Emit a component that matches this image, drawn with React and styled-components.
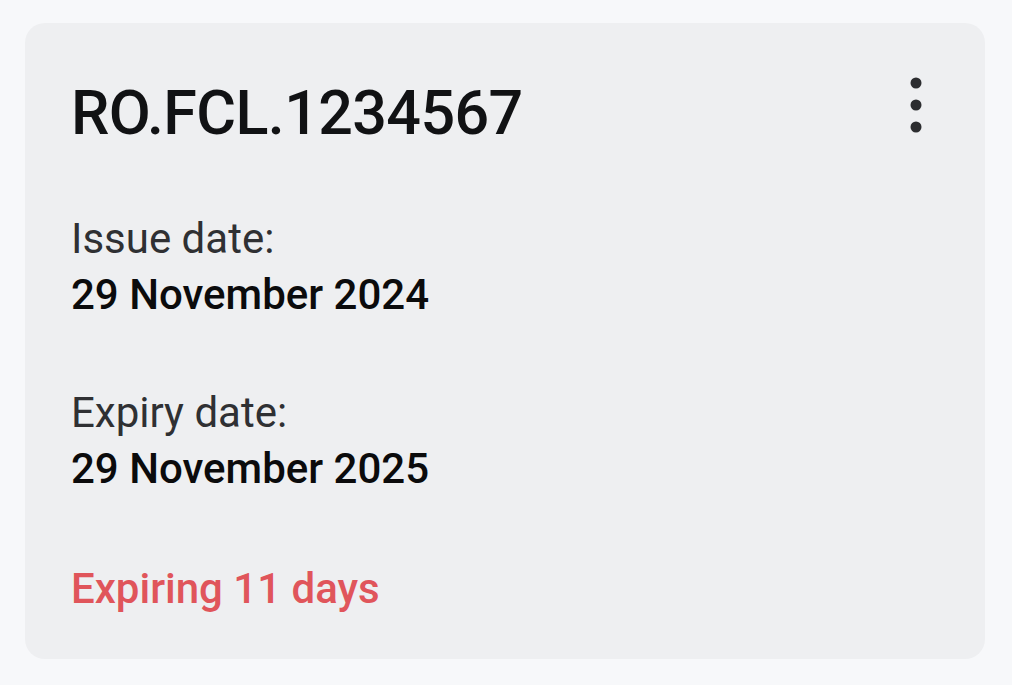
import React from 'react';
import styled, { createGlobalStyle } from 'styled-components';

const GlobalStyle = createGlobalStyle`
	html, body {
		margin: 0;
		padding: 0;
		background: #f7f8fa;
	}
	body {
		font-family: Roboto, 'Noto Sans', sans-serif;
	}
`;

const Page = styled.div`
	min-height: 685px;
	padding: 23px 27px 27px 25px;
	box-sizing: border-box;
`;

const Card = styled.section`
	background: #eeeff1;
	border-radius: 20px;
	padding: 53px 44px 42px 46px;
	display: flex;
	flex-direction: column;
	gap: 62px;
`;

const Header = styled.div`
	display: flex;
	justify-content: space-between;
	align-items: flex-start;
`;

const Title = styled.h1`
	margin: 0 0 -1px;
	font-size: 61px;
	line-height: 74px;
	font-weight: 500;
	color: #111214;
	letter-spacing: -0.01em;
`;

const MenuButton = styled.button`
	width: 46px;
	height: 60px;
	margin-top: -1px;
	margin-right: 2px;
	padding: 0;
	border: 0;
	background: transparent;
	display: flex;
	justify-content: center;
	cursor: pointer;
`;

const Field = styled.div`
	display: flex;
	flex-direction: column;
`;

const Label = styled.span`
	font-size: 42px;
	line-height: 56px;
	font-weight: 400;
	color: #2f3033;
`;

const Value = styled.span`
	font-size: 42px;
	line-height: 56px;
	font-weight: 500;
	color: #0b0b0c;
`;

const Status = styled.span`
	margin-top: 2px;
	font-size: 42px;
	line-height: 56px;
	font-weight: 500;
	color: ${({ tone }) => (tone === 'danger' ? '#e0555b' : '#2f3033')};
`;

function MoreIcon() {
	return (
		<svg width="24" height="60" viewBox="0 0 24 60">
			<circle cx="12" cy="8" r="5.5" fill="#2c2d30" />
			<circle cx="12" cy="30" r="5.5" fill="#2c2d30" />
			<circle cx="12" cy="52" r="5.5" fill="#2c2d30" />
		</svg>
	);
}

export default function App() {
	return (
		<>
			<GlobalStyle />
			<Page>
				<Card>
					<Header>
						<Title>RO.FCL.1234567</Title>
						<MenuButton aria-label="More options">
							<MoreIcon />
						</MenuButton>
					</Header>
					<Field>
						<Label>Issue date:</Label>
						<Value>29 November 2024</Value>
					</Field>
					<Field>
						<Label>Expiry date:</Label>
						<Value>29 November 2025</Value>
					</Field>
					<Status tone="danger">Expiring 11 days</Status>
				</Card>
			</Page>
		</>
	);
}
